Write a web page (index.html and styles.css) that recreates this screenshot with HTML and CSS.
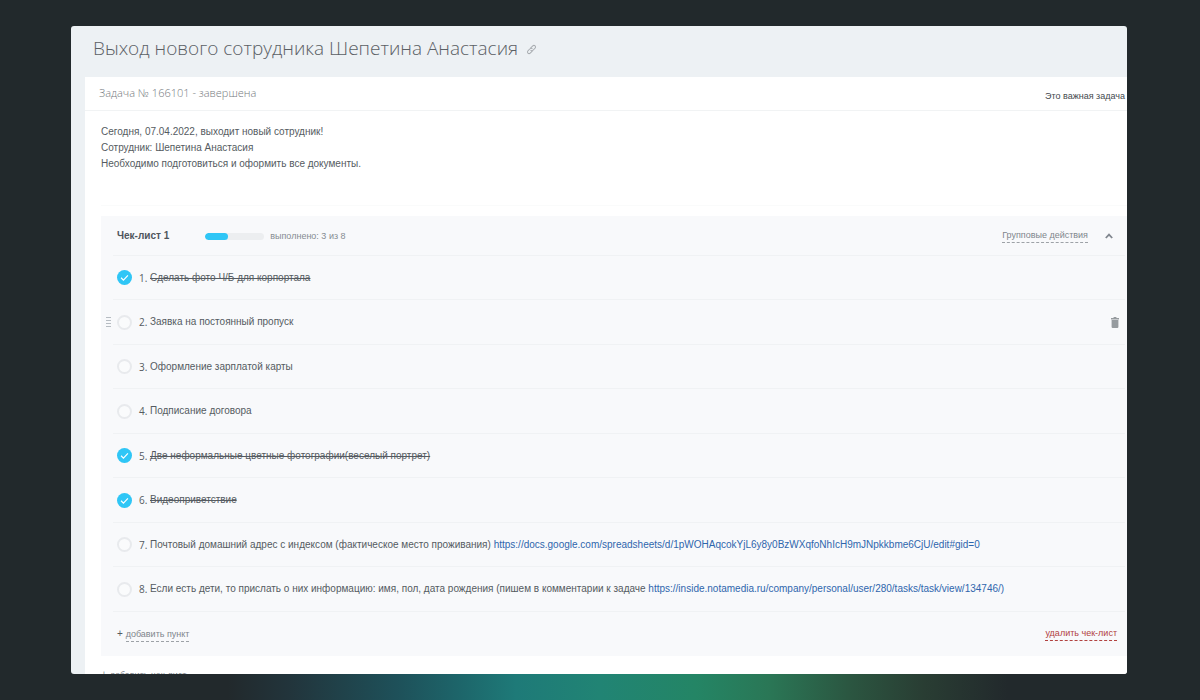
FILE: index.html
```html
<!DOCTYPE html>
<html lang="ru">
<head>
<meta charset="utf-8">
<title>Выход нового сотрудника Шепетина Анастасия</title>
<link rel="stylesheet" href="styles.css">
</head>
<body>
<main class="window">
  <header class="window-header">
    <h1 class="title">Выход нового сотрудника Шепетина Анастасия</h1>
    <button class="icon-button" type="button" aria-label="Скопировать ссылку">
      <svg width="11" height="11" viewBox="0 0 12 12" fill="none" stroke="#a9adb1" stroke-width="1.1" stroke-linecap="round"><path d="M5.200 4.300 7.400 2.100a1.700 1.700 0 0 1 2.500 2.500L7.700 6.800a1.700 1.700 0 0 1-2.400.1"/><path d="M6.800 7.700 4.600 9.900a1.700 1.700 0 0 1-2.500-2.500L4.300 5.200a1.700 1.700 0 0 1 2.400-.1"/></svg>
    </button>
  </header>
  <section class="task">
    <div class="task-bar">
      <span class="task-state">Задача № 166101 - завершена</span>
      <span class="task-priority">Это важная задача</span>
    </div>
    <div class="task-body">
      <p class="description">Сегодня, 07.04.2022, выходит новый сотрудник!<br>Сотрудник: Шепетина Анастасия<br>Необходимо подготовиться и оформить все документы.</p>
      <section class="checklist">
        <div class="checklist-head">
          <h2 class="checklist-title">Чек-лист 1</h2>
          <div class="progress"><div class="progress-fill" style="width: 39%"></div></div>
          <span class="progress-text">выполнено: 3 из 8</span>
          <button class="dashed-button group-actions" type="button">Групповые действия</button>
          <button class="icon-button" type="button" aria-label="Свернуть">
            <svg width="8" height="6" viewBox="0 0 8 6" fill="none" stroke="#80868e" stroke-width="1.8"><path d="M.8 5 4 1.6 7.2 5"/></svg>
          </button>
        </div>
        <ul class="items">
          <li class="item done"><input class="check" type="checkbox" id="i1" checked><span class="number">1.</span><label class="text" for="i1">Сделать фото Ч/Б для корпортала</label></li>
          <li class="item active"><span class="grip"></span><input class="check" type="checkbox" id="i2"><span class="number">2.</span><label class="text" for="i2">Заявка на постоянный пропуск</label>
            <button class="icon-button remove" type="button" aria-label="Удалить пункт">
              <svg width="8" height="11" viewBox="0 0 8 11" fill="#969b9f"><path d="M2.6 0h2.8v1H8v1.4H0V1h2.6z"/><path d="M.6 3h6.8v7a1 1 0 0 1-1 1H1.600a1 1 0 0 1-1-1z"/></svg>
            </button></li>
          <li class="item"><input class="check" type="checkbox" id="i3"><span class="number">3.</span><label class="text" for="i3">Оформление зарплатой карты</label></li>
          <li class="item"><input class="check" type="checkbox" id="i4"><span class="number">4.</span><label class="text" for="i4">Подписание договора</label></li>
          <li class="item done"><input class="check" type="checkbox" id="i5" checked><span class="number">5.</span><label class="text" for="i5">Две неформальные цветные фотографии(веселый портрет)</label></li>
          <li class="item done"><input class="check" type="checkbox" id="i6" checked><span class="number">6.</span><label class="text" for="i6">Видеоприветствие</label></li>
          <li class="item"><input class="check" type="checkbox" id="i7"><span class="number">7.</span><span class="text"><label for="i7">Почтовый домашний адрес с индексом (фактическое место проживания)</label> <a class="link" href="#">https://docs.google.com/spreadsheets/d/1pWOHAqcokYjL6y8y0BzWXqfoNhIcH9mJNpkkbme6CjU/edit#gid=0</a></span></li>
          <li class="item"><input class="check" type="checkbox" id="i8"><span class="number">8.</span><span class="text"><label for="i8">Если есть дети, то прислать о них информацию: имя, пол, дата рождения (пишем в комментарии к задаче</label> <a class="link" href="#">https://inside.notamedia.ru/company/personal/user/280/tasks/task/view/134746/)</a></span></li>
        </ul>
        <div class="checklist-foot">
          <span>+ <button class="dashed-button" type="button">добавить пункт</button></span>
          <button class="dashed-button danger" type="button">удалить чек-лист</button>
        </div>
      </section>
      <div class="add-checklist">+ <button class="dashed-button" type="button">добавить чек-лист</button></div>
    </div>
  </section>
</main>
</body>
</html>
```
FILE: styles.css
```css
* { box-sizing: border-box; }

body {
  margin: 0;
  height: 100vh;
  padding: 26px 73px 26px 71px;
  background: #22292c linear-gradient(90deg, #22292c 19%, #22343b 24%, #1e5059 33%, #1d6469 38%, #1e7a78 43%, #218474 50%, #248565 58%, #2a7756 64%, #2b5540 71%, #293d33 77%, #22292c 84%) bottom / 100% 40px no-repeat;
  font-family: "Liberation Sans", Arial, sans-serif;
  font-size: 10px;
  line-height: 16px;
  color: #555b61;
}

h1, h2, p, ul { margin: 0; padding: 0; }
button { padding: 0; border: 0; background: none; font: inherit; color: inherit; cursor: pointer; }

.window {
  height: 100%;
  overflow: hidden;
  border-radius: 3px;
  background: #edf1f4;
}

.window-header {
  display: flex;
  align-items: center;
  gap: 8px;
  height: 51px;
  padding: 0 22px 8px;
}

.title {
  font: 300 19px/28px "Open Sans", "Noto Sans", sans-serif;
  color: #5b6065;
}

.icon-button { display: flex; }
.window-header .icon-button { padding-top: 4px; }

.task { margin-left: 14px; background: #fff; }

.task-bar {
  display: flex;
  justify-content: space-between;
  height: 34px;
  padding: 8px 2px 0 14px;
  border-bottom: 1px solid #f1f3f4;
}

.task-state { font: 300 11px/16px "Open Sans", "Noto Sans", sans-serif; color: #74797e; }
.task-priority { padding-top: 3px; font-size: 9px; color: #44494e; }

.task-body { padding: 13px 0 0 16px; }

.description {
  padding-bottom: 33px;
  border-bottom: 1px solid #fafbfb;
  margin-bottom: 10px;
}

.checklist { background: #f8f9fb; }

.checklist-head {
  display: flex;
  align-items: center;
  height: 40px;
  margin: 0 2px 0 12px;
  padding: 0 12px 0 4px;
  border-bottom: 1px solid #f0f2f4;
}

.checklist-title { font: 700 10px/16px "Liberation Sans", Arial, sans-serif; color: #4f555b; }

.progress {
  width: 59px;
  height: 7px;
  margin: 1px 6px 0 36px;
  border-radius: 4px;
  background: #eceef0;
  overflow: hidden;
}
.progress-fill { height: 100%; border-radius: 4px; background: #2fc6f6; }

.progress-text { font-size: 9px; color: #868c92; }
.group-actions { margin: 0 17px 0 auto; }

.dashed-button {
  font-size: 9px;
  line-height: 13px;
  border-bottom: 1px dashed #9da2a7;
  color: #80868c;
}

.items { list-style: none; }

.item {
  position: relative;
  display: flex;
  align-items: center;
  min-height: 44px;
  margin: 0 2px 0 12px;
  padding: 0 0 0 4px;
  border-bottom: 1px solid #f0f2f4;
}
.item:nth-child(even) { min-height: 45px; }

.check {
  appearance: none;
  width: 15px;
  height: 15px;
  margin: 0 7px 0 0;
  border: 2px solid #e8eaed;
  border-radius: 50%;
  background: #fafbfc;
}
.check:checked {
  border: 0;
  background: #2fc6f6 url("data:image/svg+xml,%3Csvg xmlns='http://www.w3.org/2000/svg' viewBox='0 0 14 14' fill='none' stroke='white' stroke-width='1.1'%3E%3Cpath d='M3.800 7.200l2.200 2.200 4.200-4.400'/%3E%3C/svg%3E");
}

.number { width: 11px; font-family: "Open Sans", "Noto Sans", sans-serif; }
.done .text { text-decoration: line-through; }
.link { color: #2f66ad; text-decoration: none; }

.grip {
  position: absolute;
  left: -7px;
  width: 5px;
  height: 11px;
  background: repeating-linear-gradient(#b6bcc2 0 1px, transparent 1px 3px);
}
.remove { margin: 1px 6px 0 auto; }

.checklist-foot {
  display: flex;
  justify-content: space-between;
  align-items: center;
  height: 44px;
  padding: 0 10px 0 16px;
}
.danger { color: #b1413f; border-color: #b1413f; }

.add-checklist { padding-top: 11px; color: #80868c; }
```
